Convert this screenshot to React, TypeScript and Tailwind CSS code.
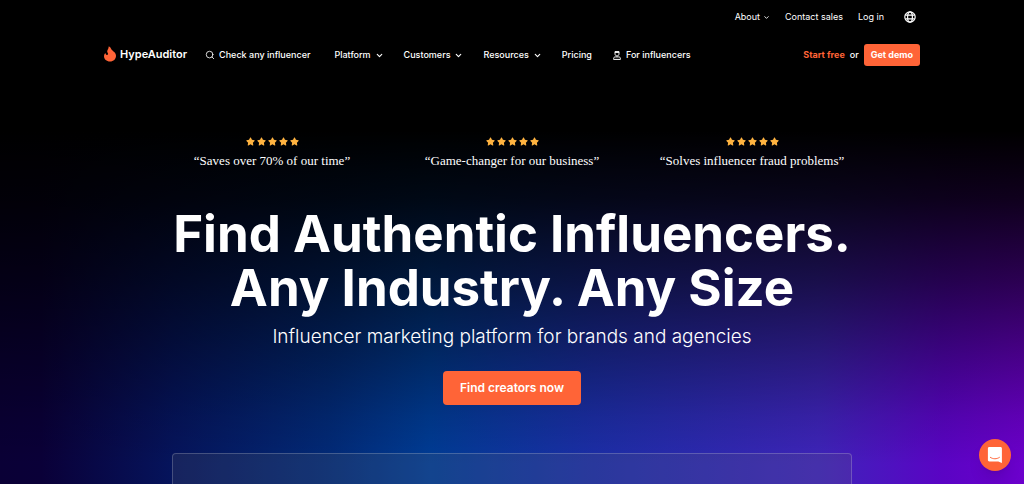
import { ReactNode } from 'react';
import { FaStar } from 'react-icons/fa';
import { ChevronDown, Search } from 'lucide-react';

const menu = [
    { label: 'Platform', hasMenu: true },
    { label: 'Customers', hasMenu: true },
    { label: 'Resources', hasMenu: true },
    { label: 'Pricing', hasMenu: false },
];

const reviews = [
    '“Saves over 70% of our time”',
    '“Game-changer for our business”',
    '“Solves influencer fraud problems”',
];

function FlameIcon() {
    return (
        <svg viewBox="0 0 12 15" className="w-3 h-4" aria-hidden="true">
            <path
                fill="#ff6437"
                d="M4.6 0C4.9 2 3.5 3.1 3.2 4.7C3.1 5.8 3.9 6.4 4.1 7.3C4.2 8.3 3.2 8.8 2.4 8.3C1.7 7.8 1.7 7.1 1.3 6.5C.4 7.4 0 8.4 0 9.5C0 12.7 2.6 15 6 15C9.5 15 12 12.6 12 9.2C12 7.2 10.9 5.9 9.5 4.9C8.2 3.8 7 2.4 6.4 .9C5.9 .4 5.3 .1 4.6 0Z"
            />
        </svg>
    );
}

function GlobeIcon() {
    return (
        <svg
            viewBox="0 0 12 12"
            className="w-3 h-3"
            fill="none"
            stroke="currentColor"
            strokeWidth="1.2"
            aria-hidden="true"
        >
            <circle cx="6" cy="6" r="5.2" />
            <ellipse cx="6" cy="6" rx="2.4" ry="5.2" />
            <path d="M1.3 4.2h9.4M1.3 7.8h9.4" />
        </svg>
    );
}

function PersonIcon() {
    return (
        <svg
            viewBox="0 0 8 9"
            className="w-2 h-[9px]"
            fill="none"
            stroke="currentColor"
            aria-hidden="true"
        >
            <path d="M2 .6h4v2.2c0 1.3-.8 2.1-2 2.1s-2-.8-2-2.1zM2 1.4h4M.6 8.4v-.9c0-1 .7-1.6 1.7-1.6h3.4c1 0 1.7.6 1.7 1.6v.9z" />
        </svg>
    );
}

function ChatIcon() {
    return (
        <svg viewBox="0 0 16 16" className="w-4 h-4" aria-hidden="true">
            <path
                fill="#fff"
                d="M2.3 0h11.2c.8 0 1.4.6 1.4 1.4V16l-3.6-1.5h-9c-.8 0-1.4-.6-1.4-1.4V1.4C.9.6 1.5 0 2.3 0Z"
            />
            <path
                fill="none"
                stroke="#ff6437"
                strokeWidth="1"
                strokeLinecap="round"
                d="M3.4 10.4c2.7 1.9 6.3 1.9 9 0"
            />
        </svg>
    );
}

function NavLink({ children }: { children: ReactNode }) {
    return (
        <a href="#" className="flex items-center gap-1">
            {children}
        </a>
    );
}

function Header() {
    return (
        <header className="w-full max-w-[816px] mx-auto text-[9px] leading-4 font-medium">
            <nav className="flex justify-end items-center gap-4 pt-[9px] pr-1 font-normal">
                <div className="flex items-center gap-[15px]">
                    <button type="button" className="flex items-center gap-[3px]">
                        About
                        <ChevronDown size={7} strokeWidth={3} />
                    </button>
                    <NavLink>Contact sales</NavLink>
                    <NavLink>Log in</NavLink>
                </div>
                <button type="button" aria-label="Language" className="ml-1">
                    <GlobeIcon />
                </button>
            </nav>

            <div className="flex items-center mt-[19px]">
                <a
                    href="#"
                    className="flex items-center gap-1 mr-[18px] pb-[2px] text-[11px] font-semibold"
                >
                    <FlameIcon />
                    HypeAuditor
                </a>
                <nav className="flex items-center gap-5">
                    <a href="#" className="flex items-center gap-1 pr-1">
                        <Search size={10} strokeWidth={2} />
                        Check any influencer
                    </a>
                    {menu.map((item) =>
                        item.hasMenu ? (
                            <button
                                key={item.label}
                                type="button"
                                className="flex items-center gap-1"
                            >
                                {item.label}
                                <ChevronDown size={9} strokeWidth={3} />
                            </button>
                        ) : (
                            <NavLink key={item.label}>{item.label}</NavLink>
                        ),
                    )}
                    <a href="#" className="flex items-center gap-[5px] pl-px">
                        <PersonIcon />
                        For influencers
                    </a>
                </nav>
                <div className="flex items-center gap-[5px] ml-auto">
                    <a href="#" className="font-bold text-[#ff6437]">
                        Start free
                    </a>
                    <span>or</span>
                    <button
                        type="button"
                        className="h-[22px] px-[7px] rounded-[3px] bg-[#ff6437] font-bold"
                    >
                        Get demo
                    </button>
                </div>
            </div>
        </header>
    );
}

export default function App() {
    return (
        <div className="relative min-h-screen overflow-hidden flex flex-col bg-[linear-gradient(180deg,#000_27%,rgba(0,0,0,0.86)_41%,rgba(0,0,0,0.6)_58%,rgba(0,0,0,0.34)_73%,rgba(0,0,0,0.12)_86%,transparent_96%),linear-gradient(90deg,#0a0036_0%,#0a0038_4%,#05145c_17%,#022a78_32%,#003c96_42%,#1c2ea8_58%,#3e24ba_80%,#5a04c4_92%,#6c00cc_100%)] font-['Inter',sans-serif] text-white">
            <Header />

            <main className="flex-1 flex flex-col w-full max-w-[720px] mx-auto pt-[71px] text-center">
                <ul className="grid grid-cols-3">
                    {reviews.map((review) => (
                        <li key={review} className="flex flex-col items-center gap-[5px]">
                            <div className="flex gap-[2px] text-[#ffb340]">
                                {[1, 2, 3, 4, 5].map((star) => (
                                    <FaStar key={star} size={9} />
                                ))}
                            </div>
                            <p className="font-['Liberation_Serif',serif] text-[13px] leading-5">
                                {review}
                            </p>
                        </li>
                    ))}
                </ul>

                <h1 className="mt-9 text-[51px] leading-[54px] font-bold">
                    Find Authentic Influencers.
                    <br />
                    Any Industry. Any Size
                </h1>
                <p className="mt-2 text-[19px] leading-7 font-light">
                    Influencer marketing platform for brands and agencies
                </p>
                <button
                    type="button"
                    className="self-center mt-5 h-[34px] px-[17px] rounded bg-[#ff6437] text-[12px] font-semibold"
                >
                    Find creators now
                </button>
                <div className="flex-1 mt-12 mx-5 rounded-t border border-b-0 border-white/20 bg-[#686868]/18" />
            </main>

            <button
                type="button"
                aria-label="Open chat"
                className="fixed right-[13px] bottom-[13px] flex items-center justify-center w-8 h-8 rounded-full bg-[#ff6437] shadow-lg"
            >
                <ChatIcon />
            </button>
        </div>
    );
}
